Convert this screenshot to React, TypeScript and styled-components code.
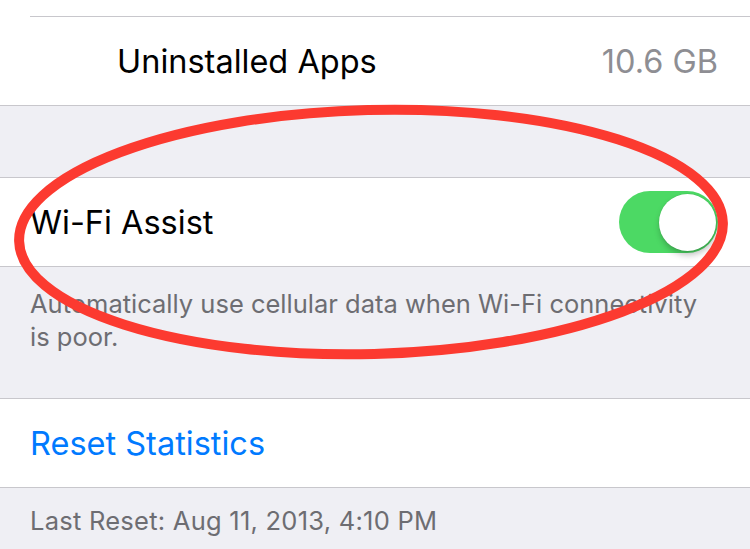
import styled, { createGlobalStyle } from 'styled-components';

const GlobalStyle = createGlobalStyle`
  html, body {
    margin: 0;
    padding: 0;
    background: #efeff4;
  }

  body {
    font-family: Inter, "Noto Sans", "Liberation Sans", sans-serif;
    -webkit-font-smoothing: antialiased;
  }
`;

const Screen = styled.div`
  position: relative;
  width: 750px;
  height: 549px;
  overflow: hidden;
  background: #efeff4;
`;

const Group = styled.section<{ $top?: boolean }>`
  background: #ffffff;
  border-top: ${({ $top }) => ($top ? 'none' : '1px solid #c8c7cc')};
  border-bottom: 1px solid #c8c7cc;
`;

const Spacer = styled.div<{ $h: number }>`
  height: ${({ $h }) => $h}px;
`;

const PrevRow = styled.div`
  height: 16px;
  border-bottom: 1px solid #c8c7cc;
  margin-left: 30px;
`;

const Row = styled.div<{ $indent?: number }>`
  height: 88px;
  display: flex;
  align-items: center;
  justify-content: space-between;
  padding: 0 32px 0 ${({ $indent }) => $indent ?? 30}px;
`;

const Label = styled.span<{ $tone?: 'blue' }>`
  font-size: 32.5px;
  color: ${({ $tone }) => ($tone === 'blue' ? '#007aff' : '#000000')};
`;

const Detail = styled.span`
  font-size: 32.5px;
  color: #8e8e93;
`;

const Footnote = styled.p<{ $spread?: number; $top?: number }>`
  margin: 0;
  padding: ${({ $top }) => $top ?? 20}px 30px 0;
  font-size: 25.5px;
  line-height: 33px;
  letter-spacing: ${({ $spread }) => $spread ?? 0}px;
  color: #6d6d72;
`;

const Switch = styled.div`
  width: 99px;
  height: 62px;
  border-radius: 31px;
  background: #4cd964;
  display: flex;
  align-items: center;
  justify-content: flex-end;
  padding: 0 2px;
  box-sizing: border-box;
`;

const Knob = styled.div`
  width: 57px;
  height: 57px;
  border-radius: 50%;
  background: #ffffff;
  box-shadow: 1px 4px 6px rgba(0, 0, 0, 0.25), 0 0 0 0.5px rgba(0, 0, 0, 0.08);
`;

const Mark = styled.svg`
  position: absolute;
  inset: 0;
  pointer-events: none;
`;

export default function App() {
  return (
    <Screen>
      <GlobalStyle />

      <Group $top>
        <PrevRow />
        <Row $indent={117}>
          <Label>Uninstalled Apps</Label>
          <Detail>10.6 GB</Detail>
        </Row>
      </Group>

      <Spacer $h={71} />

      <Group>
        <Row>
          <Label>Wi-Fi Assist</Label>
          <Switch>
            <Knob />
          </Switch>
        </Row>
      </Group>

      <Footnote>
        Automatically use cellular data when Wi-Fi connectivity
        <br />
        is poor.
      </Footnote>
      <Spacer $h={45} />

      <Group>
        <Row>
          <Label $tone="blue">Reset Statistics</Label>
        </Row>
      </Group>

      <Footnote $spread={0.25} $top={16}>
        Last Reset: Aug 11, 2013, 4:10 PM
      </Footnote>

      {/* hand-drawn highlight around the Wi-Fi Assist setting */}
      <Mark width="750" height="549" viewBox="0 0 750 549">
        <ellipse
          cx="371"
          cy="232"
          rx="352"
          ry="122"
          transform="rotate(-1.5 371 232)"
          fill="none"
          stroke="#fc3a30"
          strokeWidth="10"
        />
      </Mark>
    </Screen>
  );
}
